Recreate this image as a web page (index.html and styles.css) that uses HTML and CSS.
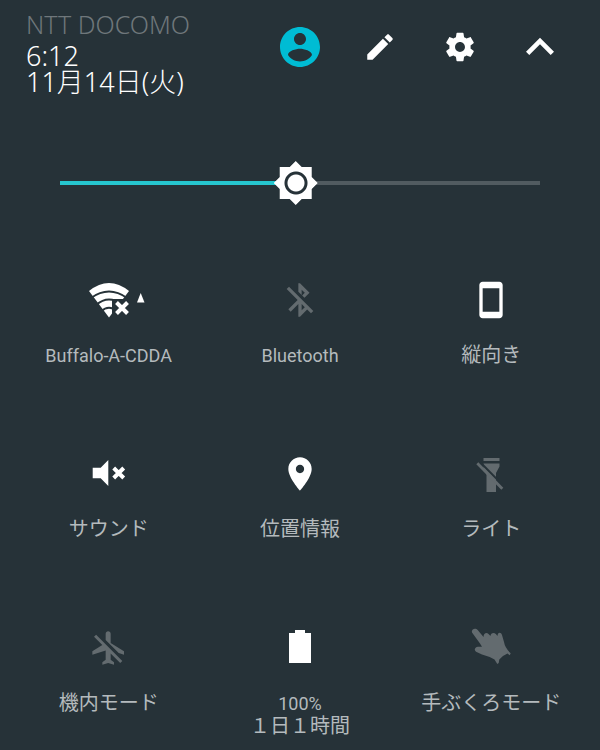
FILE: index.html
```html
<!DOCTYPE html>
<html lang="ja">

<head>
    <meta charset="UTF-8">
    <meta name="viewport" content="width=device-width, initial-scale=1.0">
    <title>Quick Settings</title>
    <link rel="stylesheet" href="styles.css">
</head>

<body>
    <!-- Status and shortcuts -->
    <header class="top-bar">
        <div class="status">
            <div class="carrier">NTT DOCOMO</div>
            <div class="clock">6:12<br>11月14日(火)</div>
        </div>
        <nav class="actions">
            <button type="button" class="user" aria-label="ユーザー">
                <svg width="48" height="48" viewBox="0 0 24 24"><path d="M12 2C6.48 2 2 6.48 2 12s4.480 10 10 10 10-4.480 10-10S17.520 2 12 2zm0 3c1.660 0 3 1.340 3 3s-1.340 3-3 3-3-1.340-3-3 1.340-3 3-3zm0 14.200c-2.500 0-4.710-1.280-6-3.220.03-1.990 4-3.080 6-3.080 1.990 0 5.970 1.090 6 3.080-1.290 1.940-3.500 3.220-6 3.220z"/></svg>
            </button>
            <button type="button" aria-label="編集">
                <svg width="34" height="34" viewBox="0 0 24 24"><path d="M3 17.250V21h3.750L17.810 9.940l-3.750-3.750L3 17.250zM20.710 7.040c.39-.39.39-1.020 0-1.410l-2.340-2.340c-.39-.39-1.020-.39-1.410 0l-1.830 1.830 3.750 3.750 1.830-1.830z"/></svg>
            </button>
            <button type="button" aria-label="設定">
                <svg width="34" height="34" viewBox="0 0 24 24"><path d="M19.430 12.980c.04-.32.07-.64.07-.98s-.03-.66-.07-.98l2.110-1.650c.19-.15.24-.42.12-.64l-2-3.460c-.12-.22-.39-.3-.61-.22l-2.490 1c-.52-.4-1.080-.73-1.690-.98l-.38-2.650C14.460 2.180 14.250 2 14 2h-4c-.25 0-.46.18-.49.42l-.38 2.650c-.61.25-1.170.59-1.690.98l-2.490-1c-.23-.09-.49 0-.61.22l-2 3.460c-.13.22-.07.49.12.64l2.110 1.650c-.04.32-.07.65-.07.98s.03.66.07.98l-2.110 1.650c-.19.15-.24.42-.12.64l2 3.460c.12.22.39.3.61.22l2.490-1c.52.4 1.080.73 1.690.98l.38 2.650c.03.24.24.42.49.42h4c.25 0 .46-.18.49-.42l.38-2.650c.61-.25 1.170-.59 1.690-.98l2.490 1c.23.09.49 0 .61-.22l2-3.460c.12-.22.07-.49-.12-.64l-2.110-1.650zM12 15.500c-1.930 0-3.500-1.570-3.500-3.500s1.570-3.500 3.500-3.500 3.500 1.570 3.500 3.500-1.570 3.500-3.500 3.500z"/></svg>
            </button>
            <button type="button" aria-label="閉じる">
                <svg width="56" height="56" viewBox="0 0 24 24"><path d="M12 8l-6 6 1.410 1.410L12 10.830l4.590 4.580L18 14z"/></svg>
            </button>
        </nav>
    </header>

    <!-- Brightness -->
    <div class="brightness">
        <input type="range" min="0" max="255" value="125" aria-label="明るさ">
    </div>

    <!-- Tiles -->
    <main class="tiles">
        <button type="button" class="tile">
            <span class="icon">
                <svg width="72" height="48" viewBox="0 0 72 48">
                    <path d="M36 41.500L16 15Q36 -1 56 15z"/>
                    <path class="gap" d="M18 22Q36 9 54 22M23 29Q36 18 49 29M28 35.500Q36 28 44 35.500"/>
                    <path class="cut" d="M39 23h20v22H39z"/>
                    <path class="cross" d="M43.500 26.500l11 11M54.500 26.500l-11 11"/>
                    <path d="M67.700 17L71.500 26.500H64z"/>
                </svg>
            </span>
            <span class="name">Buffalo-A-CDDA</span>
        </button>
        <button type="button" class="tile off">
            <span class="icon">
                <svg width="40" height="40" viewBox="0 0 24 24"><path d="M13 5.830l1.880 1.880-1.600 1.600 1.410 1.410 3.020-3.020L12 2h-1v5.030l2 2v-3.200zM5.410 4L4 5.410 10.590 12 5 17.590 6.410 19 11 14.410V22h1l4.290-4.290 2.300 2.290L20 18.590 5.410 4zM13 18.170v-3.760l1.880 1.880L13 18.170z"/></svg>
            </span>
            <span class="name">Bluetooth</span>
        </button>
        <button type="button" class="tile">
            <span class="icon">
                <svg width="40" height="40" viewBox="0 0 24 24"><path d="M17 1L7 1c-1.100 0-2 .9-2 2v18c0 1.100.9 2 2 2h10c1.100 0 2-.9 2-2V3c0-1.100-.9-2-2-2zM17 19H7V5h10v14z"/></svg>
            </span>
            <span class="name kana">縦向き</span>
        </button>

        <button type="button" class="tile">
            <span class="icon">
                <svg width="40" height="40" viewBox="0 0 40 40">
                    <path d="M3.700 13.700h8L19.300 6v26l-7.600-7.700h-8z"/>
                    <path class="cross" d="M24.700 14l10 10M34.700 14l-10 10"/>
                </svg>
            </span>
            <span class="name kana">サウンド</span>
        </button>
        <button type="button" class="tile">
            <span class="icon">
                <svg width="40" height="40" viewBox="0 0 24 24"><path d="M12 2C8.130 2 5 5.130 5 9c0 5.250 7 13 7 13s7-7.750 7-13c0-3.870-3.130-7-7-7zm0 9.500c-1.380 0-2.500-1.120-2.500-2.500s1.120-2.500 2.500-2.500 2.500 1.120 2.500 2.500-1.120 2.500-2.500 2.500z"/></svg>
            </span>
            <span class="name kana">位置情報</span>
        </button>
        <button type="button" class="tile off">
            <span class="icon">
                <svg width="40" height="40" viewBox="0 0 40 40">
                    <path d="M12.500 4h16v3h-16zM12.500 9.500h16v3L25 19v19h-9.500V19l-3-5z"/>
                    <path class="gap" d="M9 8L34 33.400"/>
                    <path d="M7.300 8.300l25 25.400-2 2-25-25.400z"/>
                </svg>
            </span>
            <span class="name kana">ライト</span>
        </button>

        <button type="button" class="tile off">
            <span class="icon">
                <svg width="40" height="40" viewBox="0 0 24 24"><path d="M13 9V3.500c0-.83-.67-1.500-1.500-1.500S10 2.670 10 3.500v3.680l7.830 7.830L21 16v-2l-8-5zM3 5.270l4.990 4.990L2 14v2l8-2.500V19l-2 1.500V22l3.500-1 3.500 1v-1.500L13 19v-3.730L18.730 21 20 19.730 4.270 4 3 5.270z"/></svg>
            </span>
            <span class="name kana">機内モード</span>
        </button>
        <button type="button" class="tile">
            <span class="icon">
                <svg width="40" height="40" viewBox="0 0 40 40"><path d="M15 2h10v3h6v30H9V5h6z"/></svg>
            </span>
            <span class="name">100%<br><span class="kana">１日１時間</span></span>
        </button>
        <button type="button" class="tile off">
            <span class="icon">
                <svg width="40" height="40" viewBox="0 0 40 40"><path d="M1 4.500C0 1 4.500-.8 6.700 2L12.500 9C12.500 5.500 15.500 4 17.500 6L19.500 8C19.500 5 23 4 24.800 6L26.500 8C26.500 4 30 3.500 31 7L33 14Q34 20 39.700 25.300L38.700 27.300 36.500 25.500Q31.500 27.500 28.300 31.500L27.700 35 26.300 36 23.500 31.500Q17 28 11 26.500L5 23.700C2.500 22 4 19 7 18.700L11 18.700 9 15.500z"/></svg>
            </span>
            <span class="name kana">手ぶくろモード</span>
        </button>
    </main>
</body>

</html>
```
FILE: styles.css
```css
body {
    margin: 0;
    background-color: #263238;
    color: #fff;
    font-family: Roboto, "Noto Sans CJK JP", sans-serif;
}

button {
    padding: 0;
    border: none;
    background: none;
    color: inherit;
    font-family: inherit;
    cursor: pointer;
}

svg {
    display: block;
    fill: currentColor;
}

/* Header */
.top-bar {
    display: flex;
    justify-content: space-between;
    align-items: flex-start;
    padding: 12px 20px 0 26px;
}

.status {
    font-family: "Noto Sans", "Noto Sans CJK JP", sans-serif;
    font-weight: 300;
    white-space: nowrap;
}

.carrier {
    font-size: 25px;
    line-height: 25px;
    margin-bottom: 6px;
    color: #6f777b;
}

.clock {
    font-size: 27px;
    line-height: 26px;
}

.actions {
    display: flex;
}

.actions button {
    display: flex;
    justify-content: center;
    align-items: center;
    width: 80px;
    height: 70px;
}

.actions .user {
    color: #00bcd4;
}

/* Brightness slider */
.brightness {
    padding: 66px 60px 0;
}

.brightness input {
    display: block;
    -webkit-appearance: none;
    appearance: none;
    width: 100%;
    height: 44px;
    margin: 0;
    background: linear-gradient(to right, #26c6cf 49%, #515b60 49%) center / 100% 4px no-repeat;
}

.brightness input::-webkit-slider-thumb {
    -webkit-appearance: none;
    width: 44px;
    height: 44px;
    background: radial-gradient(circle, #fff 8px, #263238 9px, #263238 11px, #fff 12px);
    clip-path: polygon(22px 0, 28px 6px, 38px 6px, 38px 16px, 44px 22px, 38px 28px, 38px 38px, 28px 38px, 22px 44px, 16px 38px, 6px 38px, 6px 28px, 0 22px, 6px 16px, 6px 6px, 16px 6px);
}

/* Tiles */
.tiles {
    display: grid;
    grid-template-columns: repeat(3, 1fr);
    grid-auto-rows: 126px;
    row-gap: 48px;
    padding: 71px 13px 0;
}

.tile {
    display: flex;
    flex-direction: column;
    justify-content: flex-start;
    align-items: center;
    gap: 20px;
}

.icon {
    display: flex;
    justify-content: center;
    align-items: center;
    height: 48px;
}

.off .icon {
    color: #636b6f;
}

.name {
    font-size: 18px;
    line-height: 23px;
    color: #b4babd;
    white-space: nowrap;
}

.kana {
    font-size: 20px;
}

.gap {
    fill: none;
    stroke: #263238;
    stroke-width: 2;
}

.cut {
    fill: #263238;
}

.cross {
    fill: none;
    stroke: currentColor;
    stroke-width: 4;
}
```
